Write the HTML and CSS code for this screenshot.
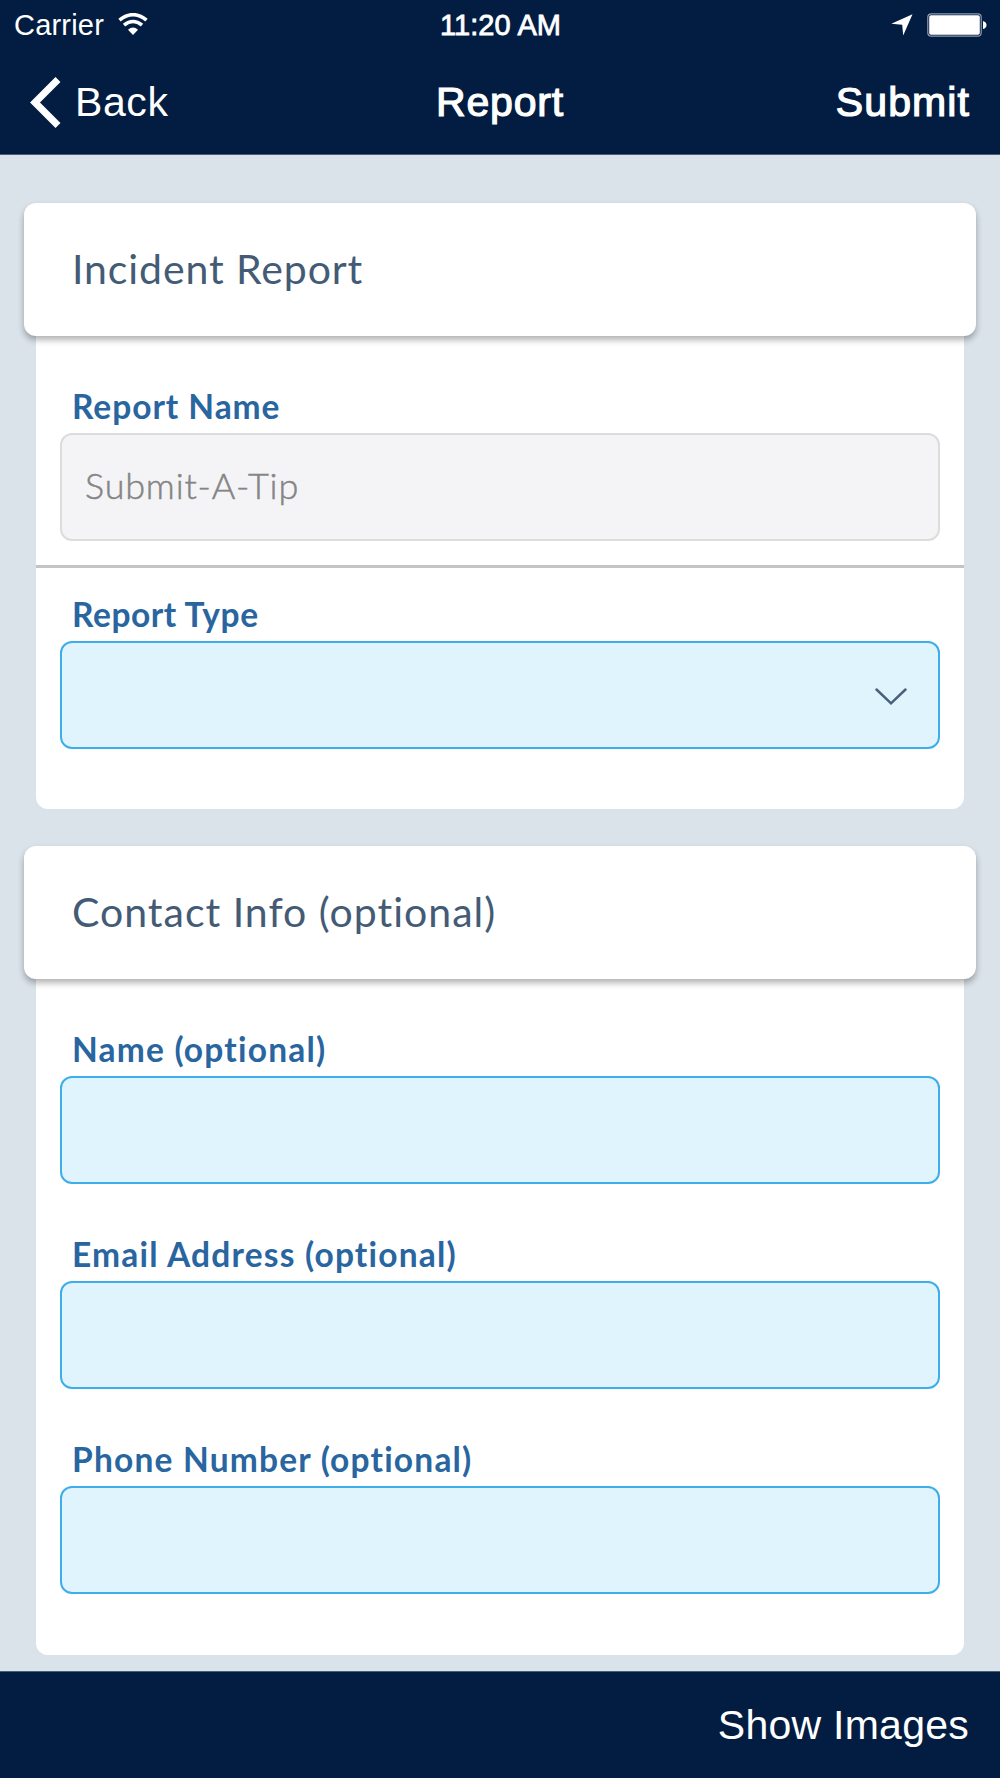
FILE: index.html
```html
<!DOCTYPE html>
<html lang="en">
<head>
    <meta charset="UTF-8">
    <meta name="viewport" content="width=device-width, initial-scale=1.0">
    <title>Report</title>
    <link rel="stylesheet" href="styles.css">
</head>
<body>
    <header class="header">
        <div class="status-bar">
            <div class="status-left">
                <span class="carrier">Carrier</span>
                <svg class="wifi" width="30" height="22" viewBox="0 0 30 22">
                    <path d="M1.500 7.200 Q15 -3.800 28.500 7.200" fill="none" stroke="#fff" stroke-width="3.600"/>
                    <path d="M6 12.200 Q15 4.800 24 12.200" fill="none" stroke="#fff" stroke-width="3.600"/>
                    <path d="M10 16.800 Q15 12.400 20 16.800 L15 22 Z" fill="#fff"/>
                </svg>
            </div>
            <span class="time">11:20 AM</span>
            <div class="status-right">
                <svg width="22" height="22" viewBox="0 0 22 22">
                    <path d="M21.500 0.300 L12.200 21.500 L11.200 10.700 L0.300 9.700 Z" fill="#fff"/>
                </svg>
                <svg width="60" height="24" viewBox="0 0 60 24">
                    <rect x="0.800" y="0.800" width="53.400" height="22.400" rx="3.500" fill="none" stroke="#8f9bae" stroke-width="1.200"/>
                    <rect x="2.200" y="2.200" width="50.600" height="19.600" rx="1.800" fill="#fff"/>
                    <path d="M56 8 Q59.500 9 59.500 12 Q59.500 15 56 16 Z" fill="#fff"/>
                </svg>
            </div>
        </div>
        <nav class="nav-bar">
            <a class="back">
                <svg width="31" height="51" viewBox="0 0 31 51">
                    <path d="M28 2.500 L5 25.500 L28 48.500" fill="none" stroke="#fff" stroke-width="7"/>
                </svg>
                <span>Back</span>
            </a>
            <span class="nav-title">Report</span>
            <a class="submit">Submit</a>
        </nav>
    </header>

    <main class="content">
        <section class="card">
            <h2 class="card-title">Incident Report</h2>
            <div class="card-body">
                <div class="field field-divided">
                    <label class="label label-name">Report Name</label>
                    <div class="input input-disabled"><span>Submit-A-Tip</span></div>
                </div>
                <div class="field">
                    <label class="label label-type">Report Type</label>
                    <div class="input input-select">
                        <svg width="32" height="18" viewBox="0 0 32 18">
                            <path d="M1.500 1.500 L16 15.300 L30.500 1.500" fill="none" stroke="#48617a" stroke-width="2.500" stroke-linecap="round"/>
                        </svg>
                    </div>
                </div>
            </div>
        </section>

        <section class="card">
            <h2 class="card-title card-title-contact">Contact Info (optional)</h2>
            <div class="card-body card-body-contact">
                <div class="field">
                    <label class="label">Name (optional)</label>
                    <div class="input"></div>
                </div>
                <div class="field">
                    <label class="label">Email Address (optional)</label>
                    <div class="input"></div>
                </div>
                <div class="field">
                    <label class="label">Phone Number (optional)</label>
                    <div class="input"></div>
                </div>
            </div>
        </section>
    </main>

    <footer class="toolbar">
        <a class="show-images">Show Images</a>
    </footer>
</body>
</html>
```

FILE: styles.css
```css
* { box-sizing: border-box; }
body {
    margin: 0;
    height: 1778px;
    display: flex;
    flex-direction: column;
    overflow: hidden;
    background-color: #dae2ea;
    font-family: Lato, sans-serif;
}
svg { display: block; flex: none; }

/* Header */
.header { flex: none; height: 155px; background-color: #021d41; border-bottom: 1px solid #4a5d78; color: #fff; font-family: "Liberation Sans", Arial, sans-serif; }
.status-bar { display: grid; grid-template-columns: 1fr auto 1fr; align-items: center; height: 50px; padding: 0 13px 0 14px; font-size: 29px; }
.status-left { display: flex; align-items: center; gap: 14px; }
.carrier { letter-spacing: 0.2px; }
.wifi { margin-top: -3px; }
.time { -webkit-text-stroke: 0.8px #fff; letter-spacing: 0.1px; }
.status-right { display: flex; align-items: center; justify-content: flex-end; gap: 14px; }
.nav-bar { display: grid; grid-template-columns: 1fr auto 1fr; align-items: center; height: 104px; padding: 0 30px; font-size: 41px; }
.back { display: flex; align-items: center; gap: 14px; letter-spacing: 0.6px; }
.nav-title { -webkit-text-stroke: 1.2px #fff; letter-spacing: 0.8px; }
.submit { justify-self: end; -webkit-text-stroke: 1.2px #fff; letter-spacing: 1.1px; }

/* Form cards */
.content { flex: 1; min-height: 0; padding: 48px 24px 0; }
.card { margin-bottom: 37px; }
.card-title { position: relative; margin: 0; height: 133px; padding: 0 48px; line-height: 131px; background-color: #fff; border-radius: 12px; box-shadow: 0 4px 6px rgba(0, 0, 0, 0.3); color: #435b74; font-size: 41px; font-weight: 400; letter-spacing: 0.9px; }
.card-title-contact { letter-spacing: 1px; }
.card-body { height: 473px; margin: 0 12px; padding: 51px 24px 0; background-color: #fff; border-radius: 0 0 12px 12px; }
.card-body-contact { height: 676px; }
.field { height: 205px; }
.field-divided { height: 208px; margin: 0 -24px; padding: 0 24px; }
.field-divided::after { content: ""; display: block; height: 3px; margin: 24px -24px 0; background-color: #c4c4c4; }
.label { display: block; height: 46px; padding-left: 12px; line-height: 39px; color: #29659f; font-size: 33.500px; font-weight: 700; letter-spacing: 1.2px; }
.label-name { letter-spacing: 0.95px; }
.label-type { letter-spacing: 0.55px; }
.input { display: flex; align-items: center; height: 108px; border: 2px solid #3eaeea; border-radius: 12px; background-color: #e0f4fe; }
.input-disabled { padding: 0 23px 4px; background-color: #f4f4f7; border-color: #dcdcdc; color: #858585; font-size: 36px; font-weight: 300; letter-spacing: 0.8px; -webkit-text-stroke: 0.5px #858585; }
.input-select { justify-content: flex-end; padding: 4px 31px 0 0; }

/* Bottom toolbar */
.toolbar { flex: none; display: flex; align-items: center; justify-content: flex-end; height: 107px; padding-right: 31px; background-color: #021d41; border-top: 1px solid #4a5d78; color: #fff; font-family: "Liberation Sans", Arial, sans-serif; font-size: 41px; letter-spacing: 0.25px; }
```
